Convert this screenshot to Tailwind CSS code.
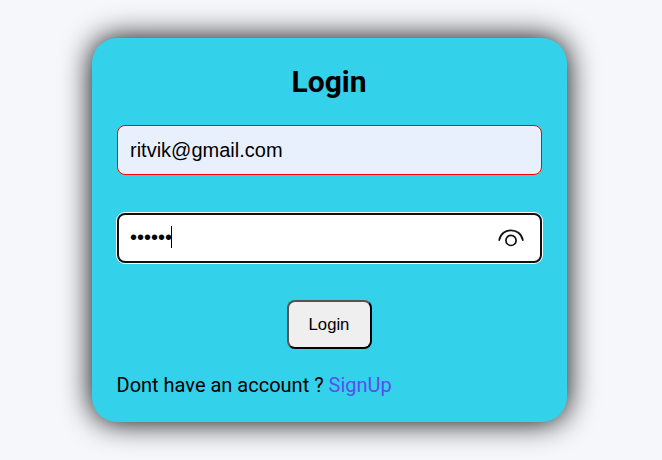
<!DOCTYPE html>
<html lang="en">
<head>
<meta charset="utf-8">
<title>Login</title>
<script src="https://cdn.jsdelivr.net/npm/@tailwindcss/browser@4"></script>
</head>
<body class="bg-[#f5f7fb] h-screen overflow-hidden font-['Roboto',sans-serif] text-black">
<main class="ml-[92px] mt-[38px] flex h-[384px] w-[475px] flex-col rounded-[25px] bg-[#34d1eb] px-[25px] pt-[26px] shadow-[0_0_30px_black]">
  <h1 class="h-9 pr-px text-center text-[30px] leading-9 font-bold">Login</h1>
  <div class="mt-[25px] flex h-[50px] items-center rounded-[8px] border border-[#f00] bg-[#e8f0fe] px-3 font-['Liberation_Sans',sans-serif] text-[20px]">ritvik@gmail.com</div>
  <div class="mt-[38px] flex h-[50px] items-center justify-between rounded-[8px] border-2 border-[#101010] bg-white pr-4 pl-[11px] shadow-[0_0_0_1px_white]">
    <div class="flex items-center pb-0.5" role="textbox" aria-label="Password">
      <span class="font-['Liberation_Sans',sans-serif] text-[20px]">••••••</span>
      <span class="-ml-px h-[22px] w-px bg-black"></span>
    </div>
    <svg class="h-[18px] w-[26px]" viewBox="0 0 26 18" fill="none" stroke="#111" stroke-width="1.7" stroke-linecap="round"><path d="M1.2 11.2C3.5 -2 22.5 -2 24.8 11.2"/><circle cx="13" cy="11.4" r="5.1"/></svg>
  </div>
  <button class="mt-[37px] h-[49px] w-[85px] self-center rounded-[8px] border-2 border-t-[#555] border-r-black border-b-black border-l-[#555] bg-[#efefef] pr-px font-['Liberation_Sans',sans-serif] text-[16.67px]">Login</button>
  <p class="-ml-[0.5px] mt-6 text-[20px] leading-6">Dont have an account ? <a class="text-[#5a4ff0]">SignUp</a></p>
</main>
</body>
</html>
